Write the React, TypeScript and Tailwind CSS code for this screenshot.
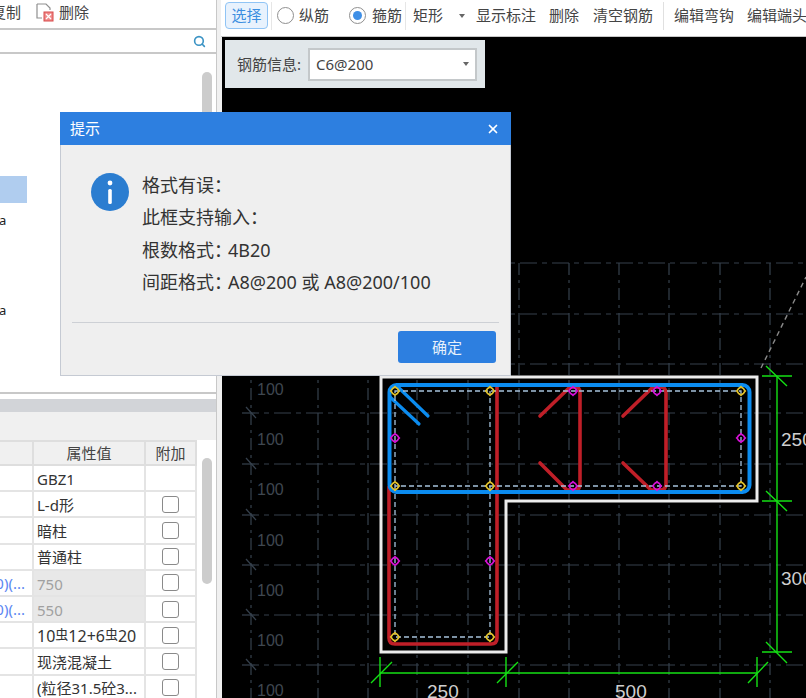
import { Search, X } from "lucide-react"

const rows = [
  { name: "", value: "GBZ1", check: false },
  { name: "", value: "L-d形", check: true },
  { name: "", value: "暗柱", check: true },
  { name: "", value: "普通柱", check: true },
  { name: "0)(...", value: "750", check: true, locked: true },
  { name: "0)(...", value: "550", check: true, locked: true },
  { name: "", value: "rebar", check: true },
  { name: "", value: "现浇混凝土", check: true },
  { name: "", value: "(粒径31.5砼3...", check: true },
]

const gridX = [318, 368, 417, 468, 519, 569, 619, 669, 720, 770]
const gridY = [263, 314, 364, 413, 464, 515, 565, 615, 665]
const labelY = [395, 445, 495, 546, 596, 646, 696]
const yellow = [[395, 391], [490, 391], [741, 391], [395, 486], [490, 486], [741, 486], [395, 637], [490, 637]]
const magenta = [[395, 438], [741, 438], [573, 391], [573, 486], [657, 391], [657, 486], [395, 561], [490, 561]]

function Marker({ x, y, color }: { x: number; y: number; color: string }) {
  return (
    <g fill="none" stroke={color} strokeWidth="1.2">
      <circle cx={x} cy={y} r="3.4" />
      <path d={`M${x - 4.6} ${y}L${x} ${y - 4.6}L${x + 4.6} ${y}L${x} ${y + 4.6}Z`} />
    </g>
  )
}

function Caret() {
  return (
    <svg width="6" height="4" viewBox="0 0 6 4" className="shrink-0">
      <path d="M0 0h6L3 4z" fill="#666" />
    </svg>
  )
}

function Radio({ checked }: { checked?: boolean }) {
  return (
    <span className="w-[17px] h-[17px] rounded-full border border-[#8f8f8f] bg-white flex items-center justify-center shrink-0">
      {checked && <span className="w-[9px] h-[9px] rounded-full bg-[#3f8fe6]" />}
    </span>
  )
}

function Drawing() {
  return (
    <svg viewBox="222 37 584 661" width="584" height="661" className="block">
      {/* 轴网 */}
      <g stroke="#36414d" strokeWidth="1.2" fill="none">
        {gridY.map((y) => (
          <line key={y} x1={y < 400 && y !== 364 ? 232 : 242} y1={y} x2="806" y2={y} strokeDasharray="17 5 5 5" />
        ))}
        {[251, ...gridX].map((x) => (
          <line key={x} x1={x} y1="263" x2={x} y2="698" strokeDasharray="12 5 3 5" />
        ))}
        {[364, 413, 464, 515, 565, 615, 665].map((y) => (
          <line key={y} x1="246" y1={y - 6} x2="256" y2={y + 5} />
        ))}
      </g>
      <g fill="#3f4750" fontSize="16" fontFamily="'Liberation Sans', sans-serif">
        {labelY.map((y) => (
          <text key={y} x="257" y={y}>
            100
          </text>
        ))}
      </g>
      <line x1="761" y1="368" x2="806" y2="277" stroke="#8a8a8a" strokeWidth="1.4" strokeDasharray="5 4" />

      {/* 截面轮廓 */}
      <path d="M381 377H757V501H506V652H381Z" fill="none" stroke="#ececec" strokeWidth="3" />

      {/* 钢筋线 */}
      <g fill="none" stroke="#bf1f28" strokeWidth="3.6" strokeLinecap="round" strokeLinejoin="round">
        <path d="M389 487V638Q389 644 395 644H491Q497 644 497 638V387" />
        <path d="M540 416L570 387H575Q580 387 580 393V484Q580 490 575 490H567L540 463" />
        <path d="M623 416L653 387H660Q666 387 666 393V484Q666 490 660 490H651L623 463" />
      </g>
      <g fill="none" stroke="#0b8cf0" strokeWidth="4" strokeLinecap="round">
        <rect x="389.5" y="385" width="360" height="107" rx="7" />
        <path d="M398 387L428 416" strokeWidth="3.2" />
        <path d="M390 397L419 424" strokeWidth="3.2" />
      </g>
      <path
        d="M395 391H741V486H395ZM395 486V637H490V391"
        fill="none"
        stroke="#a6c2dc"
        strokeWidth="1.3"
        strokeDasharray="5 3"
      />
      {yellow.map(([x, y]) => (
        <Marker key={`${x}-${y}`} x={x} y={y} color="#e2c22c" />
      ))}
      {magenta.map(([x, y]) => (
        <Marker key={`${x}-${y}`} x={x} y={y} color="#d612d6" />
      ))}

      {/* 标注 */}
      <g stroke="#14e014" strokeWidth="1.4" fill="none">
        <path d="M380 673H757M777 376V652" />
        <path d="M380 657V687M506 657V687M757 657V687" />
        <path d="M371 683L392 662M497 683L518 662M748 683L768 662" />
        <path d="M762 376H792M762 501H792M762 652H792" />
        <path d="M766 366L787 386M766 491L787 511M766 642L787 663" />
      </g>
      <g fill="#cfcfcf" fontSize="19" fontFamily="'Liberation Sans', sans-serif">
        <text x="427" y="698">
          250
        </text>
        <text x="615" y="698">
          500
        </text>
        <text x="781" y="446">
          250
        </text>
        <text x="781" y="585">
          300
        </text>
      </g>
    </svg>
  )
}

export default function App() {
  return (
    <div className="relative flex w-[806px] h-[698px] overflow-hidden bg-[#f0f0f0] text-[15px] text-[#444] font-['Noto_Sans','Noto_Sans_CJK_SC',sans-serif]">
      {/* 左侧面板 */}
      <aside className="w-[217px] shrink-0 flex flex-col border-r border-[#c8c8c8] bg-white">
        <div className="h-[28px] flex items-center shrink-0 pb-[4px]">
          <div className="w-[21px] overflow-hidden flex justify-end whitespace-nowrap">复制</div>
          <svg width="20" height="20" viewBox="0 0 20 20" className="ml-[14px]">
            <path d="M2 2h9l4 4v2M2 2v14h5" fill="none" stroke="#8f8f8f" strokeWidth="1.2" />
            <rect x="9" y="10" width="9" height="9" fill="#ef8a8a" stroke="#d84a4a" />
            <path d="M11 12l5 5M16 12l-5 5" stroke="#fff" strokeWidth="1.3" />
          </svg>
          <span className="ml-[4px]">删除</span>
        </div>
        <div className="h-[26px] shrink-0 border-y-2 border-[#c8c8c8] flex items-center justify-end pr-[10px]">
          <Search size={13} strokeWidth={3} color="#3b93c4" />
        </div>
        <div className="h-[340px] shrink-0 border-b-2 border-[#c8c8c8] flex overflow-hidden">
          <div className="w-[202px] pt-[122px] text-[13px] text-[#222]">
            <div className="w-[27px] h-[27px] bg-[#b0cdef]" />
            <div className="h-[30px] mt-[3px] flex items-center -ml-[1px]">a</div>
            <div className="h-[30px] mt-[60px] flex items-center -ml-[1px]">a</div>
          </div>
          <div className="w-[10px] h-[120px] mt-[18px] rounded-full bg-[#cccccc]" />
        </div>
        <div className="h-[5px] shrink-0" />
        <div className="h-[13px] shrink-0 bg-[#d2d4d8]" />
        <div className="h-[28px] shrink-0 bg-[#f0f0f0]" />
        <div className="flex flex-1 min-h-0 overflow-hidden">
          <div className="w-[197px] shrink-0">
            <div className="flex h-[26px] bg-[#f0f0f0] border-y-2 border-[#dedede]">
              <div className="w-[34px] border-r-2 border-[#dedede]" />
              <div className="w-[112px] border-r-2 border-[#dedede] flex items-center justify-center">属性值</div>
              <div className="w-[51px] border-r-2 border-[#dedede] flex items-center justify-center">附加</div>
            </div>
            {rows.map((row, index) => (
              <div key={index} className="flex h-[26.2px] border-b-2 border-[#e4e4e4]">
                <div className="w-[34px] border-r-2 border-[#e4e4e4] overflow-hidden flex justify-end items-center whitespace-nowrap text-[#5c86f2] pr-[7px]">
                  {row.name}
                </div>
                <div
                  className={`w-[112px] border-r-2 border-[#e4e4e4] flex items-center pl-[3px] pt-[2px] whitespace-nowrap ${
                    row.locked ? "bg-[#e8e8e8] text-[#a0a0a0]" : "text-[#333]"
                  }`}
                >
                  {row.value === "rebar" ? (
                    <span className="text-[16px]">
                      10<span className="text-[13px] align-[3px]">虫</span>12+6<span className="text-[13px] align-[3px]">虫</span>20
                    </span>
                  ) : (
                    row.value
                  )}
                </div>
                <div className="w-[51px] border-r-2 border-[#e4e4e4] flex items-center justify-center">
                  {row.check && <span className="w-[17px] h-[17px] rounded-[3px] border border-[#8a8a8a] bg-white" />}
                </div>
              </div>
            ))}
          </div>
          <div className="pl-[5px] pt-[18px]">
            <div className="w-[10px] h-[126px] rounded-full bg-[#cccccc]" />
          </div>
        </div>
      </aside>
      <div className="w-[5px] shrink-0 bg-[#f0f0f0]" />

      {/* 右侧 */}
      <main className="flex-1 flex flex-col min-w-0">
        <div className="h-[37px] shrink-0 bg-white border-b border-[#c8c8c8] flex items-center whitespace-nowrap overflow-hidden -ml-px pb-[5px]">
          <button className="ml-[4px] w-[43px] h-[27px] shrink-0 rounded-[4px] border border-[#90c4f5] bg-[#e8f2fd] text-[#3b8ee0]">
            选择
          </button>
          <div className="w-px h-[28px] shrink-0 bg-[#e6e6e6] ml-[3px]" />
          <div className="ml-[5px] shrink-0">
            <Radio />
          </div>
          <span className="ml-[5px] shrink-0">纵筋</span>
          <div className="ml-[20px] shrink-0">
            <Radio checked />
          </div>
          <span className="ml-[6px] shrink-0">箍筋</span>
          <div className="w-px h-[28px] shrink-0 bg-[#e6e6e6] ml-[3px]" />
          <div className="ml-[7px] w-[46px] shrink-0">矩形</div>
          <Caret />
          <span className="ml-[11px] shrink-0">显示标注</span>
          <span className="ml-[13px] shrink-0">删除</span>
          <span className="ml-[14px] shrink-0">清空钢筋</span>
          <div className="w-px h-[28px] shrink-0 bg-[#e0e0e0] ml-[10px]" />
          <span className="ml-[10px] shrink-0">编辑弯钩</span>
          <span className="ml-[13px] shrink-0">编辑端头</span>
        </div>
        <div className="relative flex-1 bg-black overflow-hidden">
          <Drawing />
          <div className="absolute left-[3px] top-[3px] w-[260px] h-[48px] bg-[#e1e7ea] flex items-center pl-[12px]">
            <span>钢筋信息:</span>
            <div className="ml-[7px] w-[169px] h-[33px] shrink-0 bg-white border-2 border-[#c4c8ca] flex items-center justify-between pl-[6px] pr-[6px]">
              <span>C6@200</span>
              <Caret />
            </div>
          </div>
        </div>
      </main>

      {/* 提示弹窗 */}
      <div className="absolute left-[60px] top-[112px] w-[451px] h-[264px] bg-[#efefef] border border-t-0 border-[#c5cad3] flex flex-col">
        <div className="h-[33px] bg-[#2d7fe0] text-white flex items-center justify-between pl-[10px] pr-[11px] -mx-px">
          <span>提示</span>
          <X size={14} strokeWidth={3} color="#fff" />
        </div>
        <div className="flex-1 flex pl-[30px] pt-[28px]">
          <div className="w-[38px] h-[38px] rounded-full bg-[#2b7dd0] text-white flex items-center justify-center shrink-0">
            <svg width="6" height="26" viewBox="0 0 6 26">
              <circle cx="3" cy="4" r="2.4" fill="#fff" />
              <rect x="1.2" y="10" width="3.6" height="15" rx="1.5" fill="#fff" />
            </svg>
          </div>
          <div className="ml-[13px] -mt-[4px] text-[18px] leading-[32.3px] text-[#333] whitespace-nowrap">
            <div>格式有误：</div>
            <div>此框支持输入：</div>
            <div>
              根数格式：<span className="-ml-[4px]">4B20</span>
            </div>
            <div>
              间距格式：<span className="-ml-[4px]">A8@200 或 A8@200/100</span>
            </div>
          </div>
        </div>
        <div className="mx-[11px] h-px bg-[#cdd0d5]" />
        <div className="h-[52px] flex justify-end items-start pt-[8px] pr-[14px]">
          <button className="w-[98px] h-[32px] rounded-[3px] bg-[#2d7fe0] text-[#e6f0fb]">确定</button>
        </div>
      </div>
    </div>
  )
}
